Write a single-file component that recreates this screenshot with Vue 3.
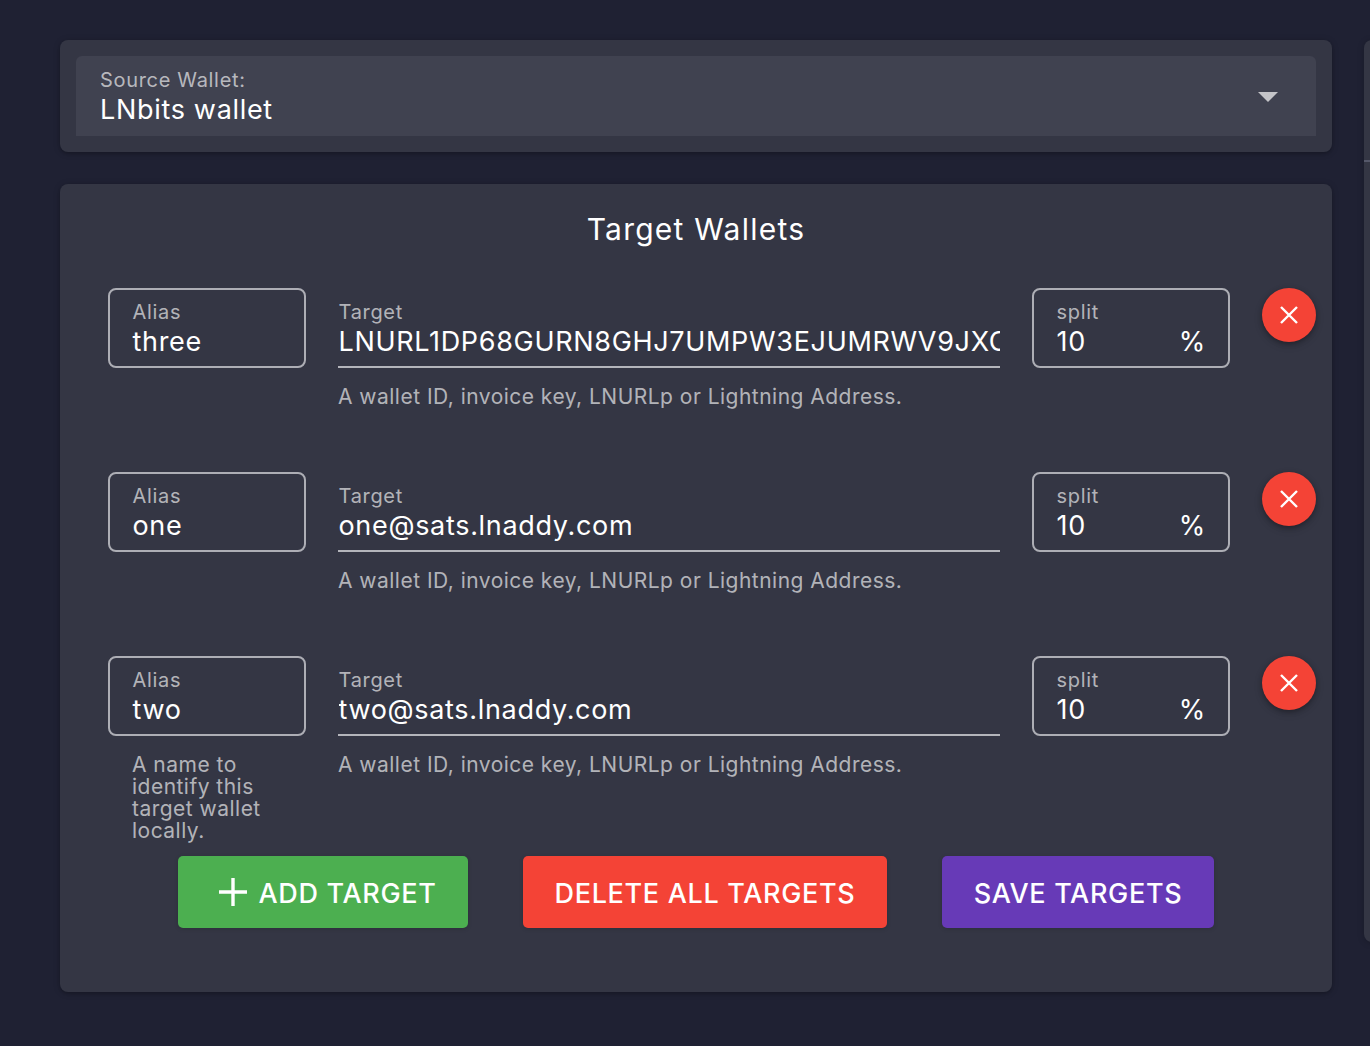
<script setup>
const rows = [
  { alias: 'three', target: 'LNURL1DP68GURN8GHJ7UMPW3EJUMRWV9JXCTNW', split: 10, aliasHint: '' },
  { alias: 'one', target: 'one@sats.lnaddy.com', split: 10, aliasHint: '' },
  { alias: 'two', target: 'two@sats.lnaddy.com', split: 10, aliasHint: 'A name to identify this target wallet locally.' },
]
</script>

<template>
  <div class="page">
    <main class="main">
      <section class="card source-card">
        <div class="select">
          <div class="select-text">
            <div class="label">Source Wallet:</div>
            <div class="value">LNbits wallet</div>
          </div>
          <span class="caret"></span>
        </div>
      </section>

      <section class="card targets-card">
        <h2 class="title">Target Wallets</h2>
        <div class="rows">
          <div v-for="row in rows" :key="row.alias" class="row">
            <div class="col alias-col">
              <div class="outlined">
                <div class="label">Alias</div>
                <div class="value">{{ row.alias }}</div>
              </div>
              <div class="hint alias-hint">{{ row.aliasHint }}</div>
            </div>
            <div class="col target-col">
              <div class="underlined">
                <div class="label">Target</div>
                <div class="value clip">{{ row.target }}</div>
              </div>
              <div class="hint target-hint">A wallet ID, invoice key, LNURLp or Lightning Address.</div>
            </div>
            <div class="col split-col">
              <div class="outlined">
                <div class="label">split</div>
                <div class="value split-value"><span>{{ row.split }}</span><span>%</span></div>
              </div>
            </div>
            <button class="round-btn" aria-label="Remove">
              <svg width="24" height="24" viewBox="0 0 24 24" fill="none" stroke="#fff" stroke-width="2.4">
                <path d="M4 4 20 20M20 4 4 20" />
              </svg>
            </button>
          </div>
        </div>
        <div class="actions">
          <button class="btn add">
            <svg class="plus" width="30" height="30" viewBox="0 0 30 30" fill="none" stroke="#fff" stroke-width="3.4">
              <path d="M15 1V29M1 15H29" />
            </svg>
            ADD TARGET
          </button>
          <button class="btn del">DELETE ALL TARGETS</button>
          <button class="btn save">SAVE TARGETS</button>
        </div>
      </section>
    </main>
    <aside class="side">
      <div class="side-top"></div>
    </aside>
  </div>
</template>

<style>
html, body { margin: 0; background: #1f2133; }
</style>

<style scoped>
.page {
  width: 1370px;
  height: 1046px;
  box-sizing: border-box;
  padding: 40px 0 0 60px;
  display: flex;
  gap: 32px;
  overflow: hidden;
  background: #1f2133;
  font-family: Inter, "Liberation Sans", sans-serif;
  color: #fff;
}
.main {
  width: 1272px;
  flex: none;
  display: flex;
  flex-direction: column;
  gap: 32px;
}
.card {
  background: #343644;
  border-radius: 8px;
  box-shadow: 0 1px 7px rgba(0, 0, 0, 0.2), 0 2px 3px rgba(0, 0, 0, 0.12);
}
.source-card { padding: 16px; }
.select {
  height: 80px;
  background: #404250;
  border-radius: 6px 6px 0 0;
  padding: 0 38px 0 24px;
  display: flex;
  align-items: center;
  justify-content: space-between;
}
.caret {
  width: 0;
  height: 0;
  margin-top: 2px;
  border-left: 10px solid transparent;
  border-right: 10px solid transparent;
  border-top: 10px solid #c4c4c8;
}
.label {
  font-size: 20px;
  line-height: 24px;
  letter-spacing: 0.68px;
  color: rgba(255, 255, 255, 0.64);
}
.value {
  font-size: 27px;
  line-height: 36px;
  letter-spacing: 0.68px;
  color: #fff;
}
.select-text { padding-top: 6px; }
.select-text .label { margin-top: -2px; }
.targets-card {
  height: 808px;
  box-sizing: border-box;
  padding: 27px 16px 0 48px;
}
.title {
  margin: 0 32px 0 0;
  text-align: center;
  font-weight: 400;
  font-size: 30px;
  line-height: 36px;
  letter-spacing: 1.24px;
}
.rows { margin-top: 41px; }
.row {
  display: flex;
  align-items: flex-start;
  gap: 32px;
}
.col { flex: none; }
.alias-col { width: 198px; }
.target-col { width: 662px; }
.split-col { width: 198px; }
.outlined {
  height: 80px;
  box-sizing: border-box;
  border: 2px solid #adaeb5;
  border-radius: 8px;
  padding: 10px 22px 0 22.5px;
}
.underlined {
  height: 80px;
  box-sizing: border-box;
  border-bottom: 2px solid #b4b5bb;
  padding: 12px 0 0 0.5px;
}
.clip {
  overflow: hidden;
  white-space: nowrap;
}
.split-value {
  display: flex;
  justify-content: space-between;
}
.hint {
  font-size: 21px;
  line-height: 22px;
  letter-spacing: 0.48px;
  color: rgba(255, 255, 255, 0.64);
}
.alias-hint {
  min-height: 104px;
  box-sizing: border-box;
  padding: 18px 24px 14px;
}
.target-hint { padding-top: 18px; }
.round-btn {
  flex: none;
  width: 54px;
  height: 54px;
  padding: 0;
  border: 0;
  border-radius: 50%;
  background: #f44336;
  display: flex;
  align-items: center;
  justify-content: center;
  box-shadow: 0 2px 5px rgba(0, 0, 0, 0.25), 0 3px 8px rgba(0, 0, 0, 0.15);
}
.actions {
  display: flex;
  justify-content: center;
  gap: 55px;
  margin-right: 32px;
}
.btn {
  height: 72px;
  padding: 2px 0 0;
  border: 0;
  border-radius: 5px;
  color: #fff;
  font-family: inherit;
  font-size: 27px;
  font-weight: 500;
  letter-spacing: 0.67px;
  display: flex;
  align-items: center;
  justify-content: center;
  box-sizing: border-box;
  box-shadow: 0 1px 4px rgba(0, 0, 0, 0.15);
}
.add { background: #4caf50; width: 290px; padding-left: 9px; }
.plus { margin: -2px 10px 0 0; }
.del { background: #f44336; width: 364px; }
.save { background: #673ab7; width: 272px; }
.side {
  flex: none;
  width: 400px;
  height: 902px;
  background: #343644;
  border-radius: 8px;
  box-shadow: 0 1px 7px rgba(0, 0, 0, 0.2);
}
.side-top {
  height: 120px;
  border-bottom: 2px solid #55586a;
}
</style>
